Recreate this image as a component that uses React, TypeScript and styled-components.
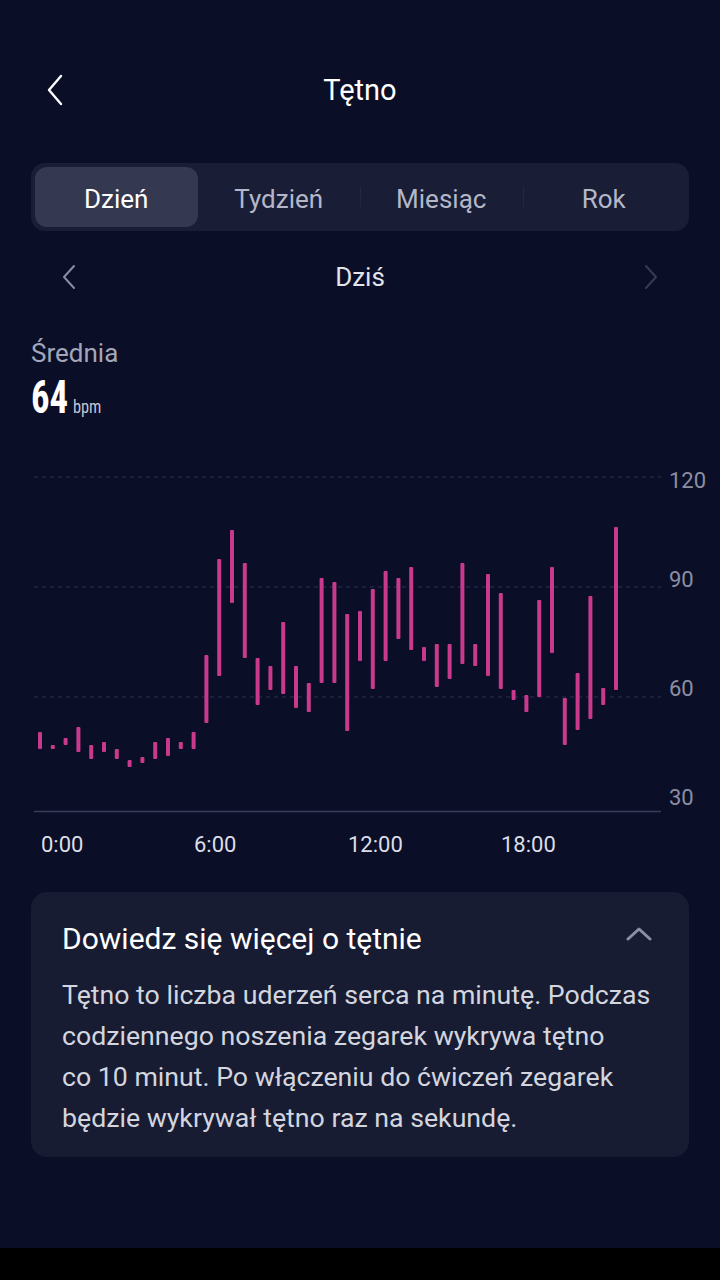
import React from "react";
import styled, { createGlobalStyle } from "styled-components";

const GlobalStyle = createGlobalStyle`
  html, body { margin: 0; padding: 0; background: #0b0e27; }
  body { font-family: Roboto, "Noto Sans", "Liberation Sans", sans-serif; }
  * { box-sizing: border-box; }
`;

const Page = styled.div`
  width: 720px;
  height: 1280px;
  background: #0b0e27;
  display: flex;
  flex-direction: column;
  overflow: hidden;
`;

const Header = styled.header`
  margin-top: 50px;
  height: 80px;
  display: grid;
  grid-template-columns: 1fr auto 1fr;
  align-items: center;
  padding: 0 31px;
`;

const BackButton = styled.button`
  justify-self: start;
  background: none;
  border: none;
  padding: 0 0 0 15px;
  display: flex;
  align-items: center;
  cursor: pointer;
`;

const Title = styled.h1`
  margin: 0;
  font-size: 29px;
  font-weight: 400;
  color: #ffffff;
  line-height: 36px;
`;

const TabBar = styled.div`
  margin: 33px 31px 0;
  height: 68px;
  border-radius: 14px;
  background: #191d35;
  padding: 4px;
  display: grid;
  grid-template-columns: repeat(4, 1fr);
`;

const Tab = styled.div<{ $active?: boolean; $divider?: boolean }>`
  position: relative;
  display: flex;
  align-items: center;
  justify-content: center;
  padding-top: 3px;
  border-radius: 12px;
  font-size: 26px;
  color: ${(p) => (p.$active ? "#ffffff" : "#b4b7c8")};
  background: ${(p) => (p.$active ? "#343850" : "transparent")};
  &::before {
    content: "";
    display: ${(p) => (p.$divider ? "block" : "none")};
    position: absolute;
    left: 0;
    top: 20px;
    bottom: 20px;
    width: 1px;
    background: #23273f;
  }
`;

const DateNav = styled.div`
  margin-top: 21px;
  height: 50px;
  display: grid;
  grid-template-columns: 1fr auto 1fr;
  align-items: center;
  padding: 0 62px;
`;

const NavArrow = styled.div<{ $end?: boolean }>`
  display: flex;
  justify-content: ${(p) => (p.$end ? "flex-end" : "flex-start")};
`;

const DateLabel = styled.div`
  font-size: 26px;
  color: #e2e4ec;
`;

const AvgLabel = styled.div`
  margin: 36px 31px 0;
  font-size: 26px;
  line-height: 30px;
  color: #a3a6b8;
`;

const AvgRow = styled.div`
  margin: 6px 31px 0;
  height: 46px;
  display: flex;
  align-items: baseline;
  font-family: "Liberation Sans Narrow", "Roboto Condensed", Roboto, sans-serif;
`;

const AvgValue = styled.span`
  display: inline-block;
  font-size: 46px;
  line-height: 46px;
  font-weight: 700;
  color: #ffffff;
  transform: scaleX(0.8);
  transform-origin: left center;
  margin-right: -5px;
`;

const AvgUnit = styled.span`
  display: inline-block;
  font-size: 19px;
  line-height: 20px;
  color: #c3c6d3;
  transform: scaleX(0.86);
  transform-origin: left center;
`;

const ChartSvg = styled.svg`
  display: block;
  width: 720px;
  height: 450px;
  font-family: Roboto, "Noto Sans", sans-serif;
`;

const InfoCard = styled.section`
  margin: 22px 31px 0;
  background: #181c33;
  border-radius: 16px;
  padding: 27px 31px 18px;
`;

const CardHeader = styled.div`
  display: flex;
  align-items: center;
  justify-content: space-between;
  height: 40px;
`;

const CardTitle = styled.h2`
  margin: 0;
  font-size: 30px;
  font-weight: 400;
  color: #ffffff;
  line-height: 40px;
`;

const CollapseIcon = styled.div`
  display: flex;
  margin-top: -12px;
  margin-right: 6px;
`;

const CardBody = styled.p`
  margin: 16px 0 0;
  font-size: 26.7px;
  line-height: 41px;
  color: #d3d5df;
`;

const Spacer = styled.div`
  flex: 1;
`;

const SystemBar = styled.div`
  height: 32px;
  background: #000000;
`;

// bars: [top, bottom] in page pixels
const BARS: [number, number][] = [
  [732, 749], [745, 749], [738, 745], [727, 752], [745, 759], [742, 752],
  [749, 759], [760, 767], [757, 763], [742, 759], [738, 756], [742, 749],
  [732, 749], [655, 723], [559, 676], [530, 603], [563, 658], [658, 705],
  [666, 690], [622, 694], [666, 708], [683, 712], [578, 683], [582, 683],
  [614, 731], [611, 661], [589, 689], [571, 661], [578, 639], [567, 650],
  [647, 661], [644, 687], [644, 679], [563, 664], [644, 666], [574, 676],
  [593, 689], [690, 700], [695, 712], [600, 697], [567, 653], [698, 745],
  [673, 730], [596, 719], [688, 705], [527, 690],
];

const CHART_TOP = 420;
const py = (y: number) => y - CHART_TOP;

const Chart: React.FC = () => (
  <ChartSvg viewBox="0 0 720 450">
    {[477, 587, 697].map((y) => (
      <line key={y} x1={34} x2={661} y1={py(y)} y2={py(y)} stroke="#2c3150" strokeWidth={1} strokeDasharray="4 4" />
    ))}
    <line x1={34} x2={661} y1={py(811.5)} y2={py(811.5)} stroke="#383d5a" strokeWidth={1.5} />
    {[
      ["120", 488],
      ["90", 587],
      ["60", 696],
      ["30", 805],
    ].map(([t, y]) => (
      <text key={t} x={669} y={py(y as number)} fontSize={22} fill="#8b8ea3">
        {t}
      </text>
    ))}
    {[
      ["0:00", 41],
      ["6:00", 194],
      ["12:00", 348],
      ["18:00", 501],
    ].map(([t, x]) => (
      <text key={t} x={x as number} y={py(852)} fontSize={22} fill="#dcdee7">
        {t}
      </text>
    ))}
    {BARS.map(([t, b], i) => (
      <rect key={i} x={38 + i * 12.8} y={py(t)} width={4} height={b - t} rx={1} fill="#c93a8c" />
    ))}
  </ChartSvg>
);

export default function App() {
  return (
    <>
      <GlobalStyle />
      <Page>
        <Header>
          <BackButton aria-label="Wstecz">
            <svg width="18" height="32" viewBox="0 0 18 32">
              <path d="M15 2 L3 16 L15 30" fill="none" stroke="#ffffff" strokeWidth="2.4" strokeLinecap="round" strokeLinejoin="round" />
            </svg>
          </BackButton>
          <Title>Tętno</Title>
          <div />
        </Header>

        <TabBar>
          <Tab $active>Dzień</Tab>
          <Tab>Tydzień</Tab>
          <Tab $divider>Miesiąc</Tab>
          <Tab $divider>Rok</Tab>
        </TabBar>

        <DateNav>
          <NavArrow>
            <svg width="14" height="26" viewBox="0 0 14 26">
              <path d="M12 2 L2 13 L12 24" fill="none" stroke="#8a8da2" strokeWidth="2" strokeLinecap="round" strokeLinejoin="round" />
            </svg>
          </NavArrow>
          <DateLabel>Dziś</DateLabel>
          <NavArrow $end>
            <svg width="14" height="26" viewBox="0 0 14 26">
              <path d="M2 2 L12 13 L2 24" fill="none" stroke="#353a55" strokeWidth="2" strokeLinecap="round" strokeLinejoin="round" />
            </svg>
          </NavArrow>
        </DateNav>

        <AvgLabel>Średnia</AvgLabel>
        <AvgRow>
          <AvgValue>64</AvgValue>
          <AvgUnit>bpm</AvgUnit>
        </AvgRow>

        <Chart />

        <InfoCard>
          <CardHeader>
            <CardTitle>Dowiedz się więcej o tętnie</CardTitle>
            <CollapseIcon>
              <svg width="26" height="15" viewBox="0 0 26 15">
                <path d="M2 13 L13 3 L24 13" fill="none" stroke="#8d90a5" strokeWidth="3" strokeLinecap="round" strokeLinejoin="round" />
              </svg>
            </CollapseIcon>
          </CardHeader>
          <CardBody>
            Tętno to liczba uderzeń serca na minutę. Podczas
            <br />
            codziennego noszenia zegarek wykrywa tętno
            <br />
            co 10 minut. Po włączeniu do ćwiczeń zegarek
            <br />
            będzie wykrywał tętno raz na sekundę.
          </CardBody>
        </InfoCard>

        <Spacer />
        <SystemBar />
      </Page>
    </>
  );
}
